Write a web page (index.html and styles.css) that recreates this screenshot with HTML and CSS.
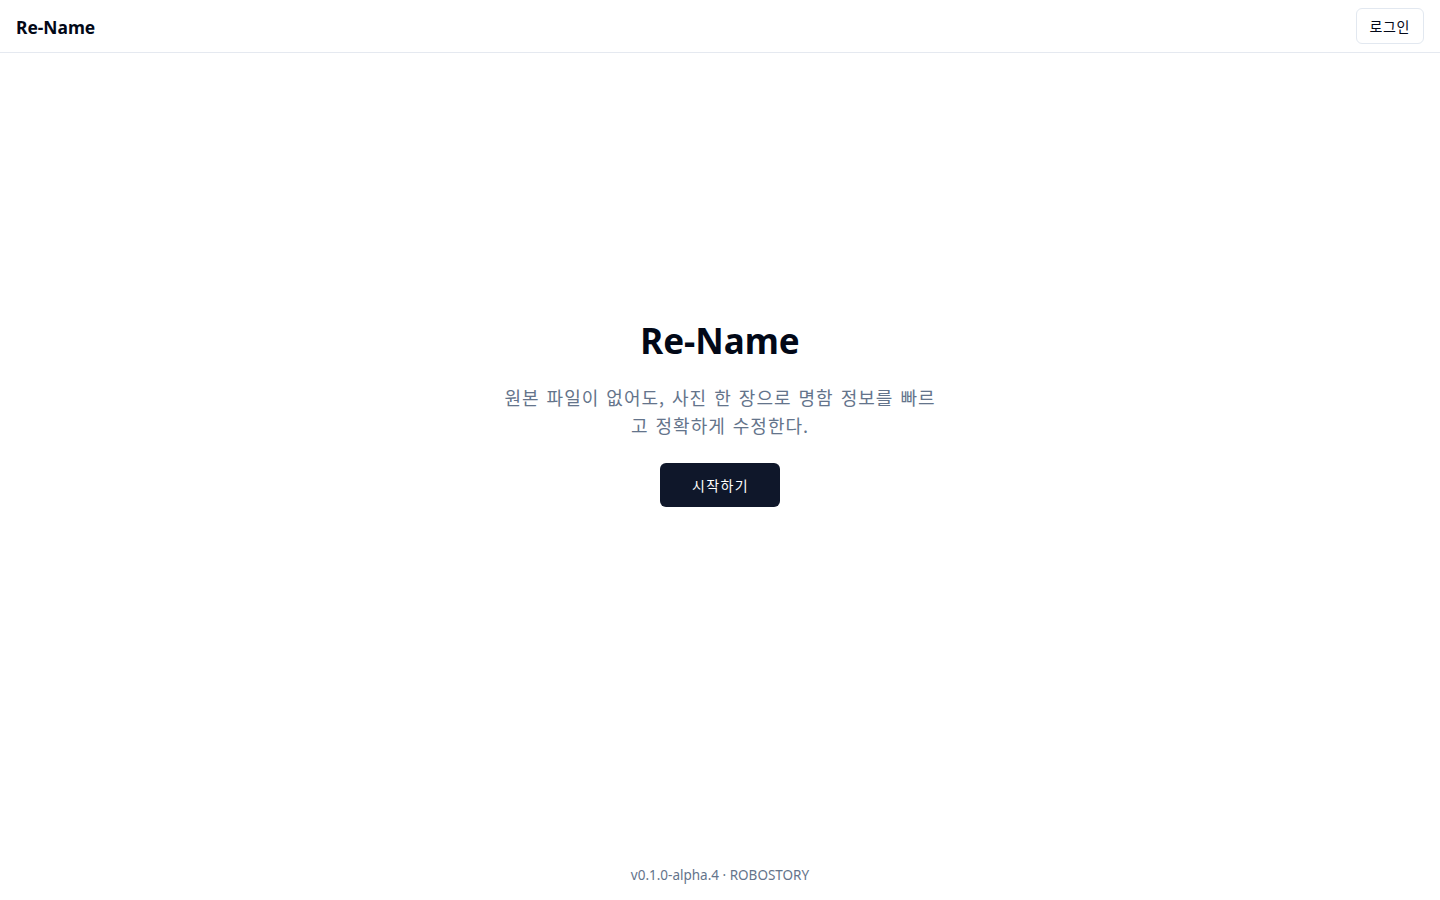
FILE: index.html
```html
<!DOCTYPE html>
<html lang="ko">
<head>
<meta charset="utf-8">
<title>Re-Name</title>
<link rel="stylesheet" href="styles.css">
</head>
<body>
<div class="page">
  <header class="topbar">
    <div class="brand">Re-Name</div>
    <button class="login">로그인</button>
  </header>
  <main class="hero">
    <h1 class="title">Re-Name</h1>
    <p class="subtitle">원본 파일이 없어도, 사진 한 장으로 명함 정보를 빠르고 정확하게 수정한다.</p>
    <button class="start">시작하기</button>
  </main>
  <footer class="footer">v0.1.0-alpha.4 · ROBOSTORY</footer>
</div>
</body>
</html>
```

FILE: styles.css
```css
* { box-sizing: border-box; }
html, body { margin: 0; padding: 0; }
body {
  font-family: "Noto Sans", "Noto Sans CJK KR", sans-serif;
  color: #020817;
  background: #ffffff;
}
.page {
  min-height: 100vh;
  height: 100vh;
  display: flex;
  flex-direction: column;
}
.topbar {
  height: 53px;
  border-bottom: 1px solid #e5e9f0;
  display: flex;
  align-items: center;
  justify-content: space-between;
  padding: 0 16px;
}
.brand {
  font-size: 17.4px;
  font-weight: 700;
  color: #020817;
  margin-top: 2px;
}
.login {
  font-family: "Noto Sans CJK KR", sans-serif;
  font-size: 14px;
  letter-spacing: 0.6px;
  height: 36px;
  padding: 0 13px;
  background: #fff;
  border: 1px solid #e2e8f0;
  border-radius: 6px;
  color: #020817;
  margin-top: -1px;
}
.hero {
  flex: 1;
  display: flex;
  flex-direction: column;
  align-items: center;
  padding-top: 268px;
}
.title {
  margin: 0;
  font-size: 35px;
  line-height: 40px;
  font-weight: 700;
  color: #020817;
}
.subtitle {
  margin: 22px 0 0;
  max-width: 448px;
  text-align: center;
  font-family: "Noto Sans CJK KR", sans-serif;
  font-size: 18px;
  line-height: 28px;
  color: #64748b;
  letter-spacing: 1px;
  word-spacing: 1px;
  word-break: break-all;
}
.start {
  margin-top: 24px;
  width: 120px;
  height: 44px;
  background: #0f172a;
  color: #fff;
  border: none;
  border-radius: 6px;
  font-family: "Noto Sans CJK KR", sans-serif;
  font-size: 14px;
  letter-spacing: 1.4px;
  padding: 0 0 0 1px;
}
.footer {
  padding: 17px 0 15px;
  text-align: center;
  font-size: 13.5px;
  line-height: 20px;
  color: #64748b;
  font-family: "Noto Sans", "Noto Sans CJK KR", sans-serif;
}
```
